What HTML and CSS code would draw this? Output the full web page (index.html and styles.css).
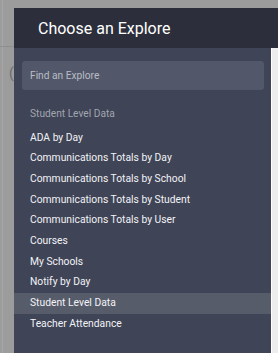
FILE: index.html
```html
<!DOCTYPE html>
<html lang="en">

<head>
    <meta charset="UTF-8">
    <meta name="viewport" content="width=device-width, initial-scale=1.0">
    <title>Choose an Explore</title>
    <link rel="stylesheet" href="styles.css">
</head>

<body>
    <div class="backdrop">
        <span class="peek">(</span>
    </div>

    <div class="modal">
        <div class="modal-header">
            <h1>Choose an Explore</h1>
        </div>
        <div class="modal-body">
            <div class="panel">
                <input type="text" class="search" placeholder="Find an Explore">

                <div class="group-label">Student Level Data</div>
                <ul class="explore-list">
                    <li>ADA by Day</li>
                    <li>Communications Totals by Day</li>
                    <li>Communications Totals by School</li>
                    <li>Communications Totals by Student</li>
                    <li>Communications Totals by User</li>
                    <li>Courses</li>
                    <li>My Schools</li>
                    <li>Notify by Day</li>
                    <li class="active">Student Level Data</li>
                    <li>Teacher Attendance</li>
                </ul>
            </div>
        </div>
    </div>
</body>

</html>
```

FILE: styles.css
```css
html {
    background-color: #9c9c9c;
}

body {
    margin: 0;
    padding-top: 8px;
    font-family: Roboto, "Liberation Sans", sans-serif;
    overflow: hidden;
    height: 345px;
}

/* page behind the overlay */
.backdrop {
    position: absolute;
    left: 0;
    top: 0;
    width: 14px;
    height: 353px;
    background-color: #9c9c9c;
}

.backdrop::before {
    content: "";
    position: absolute;
    left: 2px;
    top: 0;
    width: 1px;
    height: 353px;
    background-color: #a7a7a7;
}

.backdrop::after {
    content: "";
    position: absolute;
    left: 0;
    top: 46px;
    width: 14px;
    height: 1px;
    background-color: #8f8f8f;
}

.peek {
    position: absolute;
    left: 9px;
    top: 65px;
    font-size: 14px;
    color: #6d6d6d;
}

.modal {
    margin-left: 14px;
    background-color: #ededed;
}

.modal-header {
    background-color: #2c2f3b;
    height: 40px;
    display: flex;
    align-items: center;
    padding-left: 24px;
}

.modal-header h1 {
    margin: 0;
    font-size: 16px;
    font-weight: 400;
    color: #ffffff;
}

.panel {
    width: 258px;
    height: 305px;
    background-color: #3f4456;
    border-right: 1px solid #ffffff;
    padding-top: 13px;
    box-sizing: border-box;
}

.search {
    display: block;
    box-sizing: border-box;
    width: 242px;
    height: 29px;
    margin-left: 8px;
    padding: 0 8px;
    border: none;
    border-radius: 3px;
    background-color: #525869;
    font-family: inherit;
    font-size: 10.2px;
    color: #ffffff;
    outline: none;
}

.search::placeholder {
    color: #b9bcc5;
}

.group-label {
    padding: 18px 16px 0;
    height: 19.6px;
    line-height: 12px;
    font-size: 10.2px;
    color: #a2a6b1;
}

.explore-list {
    list-style: none;
    margin: 0;
    padding: 0;
}

.explore-list li {
    height: 20.7px;
    line-height: 20.7px;
    padding-left: 16px;
    font-size: 10.3px;
    color: #f2f3f6;
}

.explore-list li.active {
    background-color: #575c6b;
}
```
